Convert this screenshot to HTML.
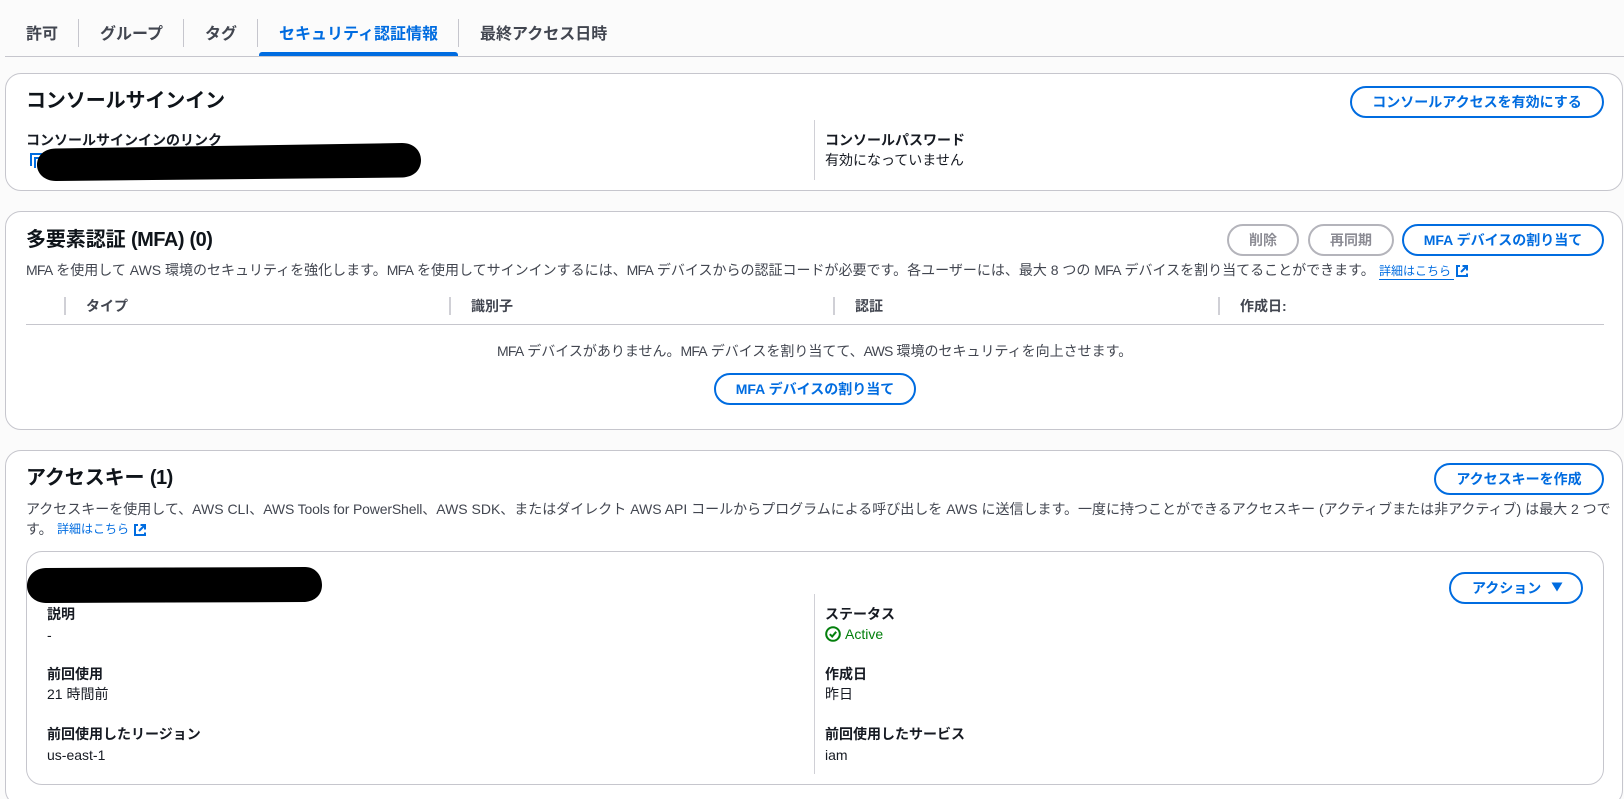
<!DOCTYPE html>
<html lang="ja">
<head>
<meta charset="utf-8">
<title>セキュリティ認証情報</title>
<style>
html,body{margin:0;padding:0;background:#fbfbfb;width:1624px;height:799px;overflow:hidden;}
body{font-family:"Liberation Sans","Noto Sans CJK JP",sans-serif;font-size:14px;color:#161a22;}
#clip{position:relative;width:1624px;height:799px;overflow:hidden;}
.t{position:absolute;white-space:nowrap;line-height:20px;}
.b{font-weight:700;}
.m{letter-spacing:-.8px;}
.n{letter-spacing:-.15px;}
.tab{position:absolute;white-space:nowrap;font-size:16px;font-weight:700;line-height:20px;color:#424650;top:25px;}
.dv{position:absolute;width:1px;background:#c6c6cd;}
.dw{position:absolute;width:2px;background:#d0d0d6;top:297px;height:18px;}
.panel{position:absolute;box-sizing:border-box;background:#fff;border:1px solid #c6c6cd;border-radius:16px;}
.h{position:absolute;white-space:nowrap;font-size:20px;font-weight:700;line-height:24px;color:#0f141a;letter-spacing:-.1px;}
.h span{letter-spacing:-.5px;}
.btn{position:absolute;box-sizing:border-box;border:2px solid #006ce0;border-radius:20px;color:#006ce0;font-weight:700;font-size:14px;text-align:center;white-space:nowrap;background:#fff;line-height:28px;}
.dis{border-color:#b4b4bb;color:#8c8c94;}
.th{position:absolute;white-space:nowrap;font-weight:700;color:#424650;line-height:20px;top:296px;}
.lnk{position:absolute;white-space:nowrap;font-size:12px;line-height:16px;color:#006ce0;}
svg{position:absolute;overflow:visible;}
</style>
</head>
<body>
<div id="clip">
<!-- tabs -->
<div class="tab" style="left:26px">許可</div>
<div class="tab" style="left:100px">グループ</div>
<div class="tab" style="left:205px">タグ</div>
<div class="tab" style="left:279px;color:#006ce0">セキュリティ認証情報</div>
<div class="tab" style="left:480px">最終アクセス日時</div>
<div class="dv" style="left:78px;top:19px;height:28px"></div>
<div class="dv" style="left:183px;top:19px;height:28px"></div>
<div class="dv" style="left:257px;top:19px;height:28px"></div>
<div class="dv" style="left:458px;top:19px;height:28px"></div>
<div style="position:absolute;left:5px;top:56px;width:1619px;height:1px;background:#c6c6cd"></div>
<div style="position:absolute;left:259px;top:52px;width:199px;height:4px;background:#006ce0;border-radius:3px 3px 0 0"></div>

<!-- panel 1 -->
<div class="panel" style="left:5px;top:73px;width:1618px;height:118px"></div>
<div class="h" style="left:26px;top:89px">コンソールサインイン</div>
<div class="t b" style="left:26px;top:130px">コンソールサインインのリンク</div>
<svg style="left:30px;top:153px" width="16" height="16" viewBox="0 0 16 16" fill="none" stroke="#006ce0" stroke-width="2"><path d="M1 13V1h11"/><path d="M5 15V5h6"/></svg>
<svg style="left:0;top:0" width="1624" height="799"><path d="M56 148.500 L402 143 C414 143 421 151 421 160 C421 170 414 177 402 177.500 L56 181 C44 181 37 173 37 165 C37 156 44 148.500 56 148.500Z" fill="#000"/></svg>
<div class="dv" style="left:814px;top:120px;height:60px;background:#d0d0d6"></div>
<div class="t b" style="left:825px;top:130px">コンソールパスワード</div>
<div class="t" style="left:825px;top:150px">有効になっていません</div>
<div class="btn" style="left:1350px;top:86px;width:254px;height:32px">コンソールアクセスを有効にする</div>

<!-- panel 2 -->
<div class="panel" style="left:5px;top:211px;width:1618px;height:219px"></div>
<div class="h" style="left:26px;top:228px">多要素認証 <span>(MFA)</span> <span>(0)</span></div>
<div class="btn dis" style="left:1227px;top:224px;width:72px;height:32px">削除</div>
<div class="btn dis" style="left:1308px;top:224px;width:86px;height:32px">再同期</div>
<div class="btn" style="left:1402px;top:224px;width:202px;height:32px">MFA デバイスの割り当て</div>
<div class="t" style="left:26px;top:260px;color:#424650"><span class="m">MFA</span> を使用して AWS 環境のセキュリティを強化します。<span class="m">MFA</span> を使用してサインインするには、<span class="m">MFA</span> デバイスからの認証コードが必要です。各ユーザーには、最大 8 つの <span class="m">MFA</span> デバイスを割り当てることができます。</div>
<div class="lnk" style="left:1379px;top:263px">詳細はこちら</div>
<div style="position:absolute;left:1379px;top:279px;width:75px;height:1px;background:#006ce0"></div>
<svg style="left:1456px;top:265px" width="12" height="12" viewBox="0 0 12 12" fill="none" stroke="#006ce0" stroke-width="2"><path d="M4 1H1V11H11V8.500"/><path d="M5 7L10.500 1.500M6.500 1H11V5.500"/></svg>
<div class="dw" style="left:64px"></div>
<div class="dw" style="left:449px"></div>
<div class="dw" style="left:833px"></div>
<div class="dw" style="left:1218px"></div>
<div class="th" style="left:86px">タイプ</div>
<div class="th" style="left:471px">識別子</div>
<div class="th" style="left:855px">認証</div>
<div class="th" style="left:1240px">作成日:</div>
<div style="position:absolute;left:26px;top:324px;width:1578px;height:1px;background:#c6c6cd"></div>
<div class="t" style="left:497px;top:341px;color:#424650"><span class="m">MFA</span> デバイスがありません。<span class="m">MFA</span> デバイスを割り当てて、<span class="m">AWS</span> 環境のセキュリティを向上させます。</div>
<div class="btn" style="left:714px;top:373px;width:202px;height:32px">MFA デバイスの割り当て</div>

<!-- panel 3 -->
<div class="panel" style="left:5px;top:450px;width:1618px;height:356px"></div>
<div class="h" style="left:26px;top:466px">アクセスキー <span>(1)</span></div>
<div class="btn" style="left:1434px;top:463px;width:170px;height:32px">アクセスキーを作成</div>
<div class="t" style="left:26px;top:499px;color:#424650">アクセスキーを使用して、AWS CLI、<span class="n">AWS Tools for PowerShell</span>、AWS SDK、またはダイレクト AWS API コールからプログラムによる呼び出しを AWS に送信します。一度に持つことができるアクセスキー (アクティブまたは非アクティブ) は最大 2 つで</div>
<div class="t" style="left:26px;top:519px;color:#424650">す。</div>
<div class="lnk" style="left:57px;top:521px">詳細はこちら</div>
<svg style="left:134px;top:524px" width="12" height="12" viewBox="0 0 12 12" fill="none" stroke="#006ce0" stroke-width="2"><path d="M4 1H1V11H11V8.500"/><path d="M5 7L10.500 1.500M6.500 1H11V5.500"/></svg>

<div class="panel" style="left:26px;top:551px;width:1578px;height:234px"></div>
<svg style="left:0;top:0" width="1624" height="799"><path d="M46 568 L305 567 C315 567 322 575 322 585 C322 595 315 601 305 602 L46 603 C36 603 27 596 27 586 C27 575 36 568 46 568Z" fill="#000"/></svg>
<div class="btn" style="left:1449px;top:572px;width:134px;height:32px;text-align:left;padding-left:21px">アクション</div>
<svg style="left:1551px;top:582px" width="12" height="10" viewBox="0 0 12 10"><path d="M0.500 0.500H11.500L6 9.500Z" fill="#006ce0"/></svg>
<div class="dv" style="left:814px;top:594px;height:180px;background:#d0d0d6"></div>

<div class="t b" style="left:47px;top:604px">説明</div>
<div class="t" style="left:47px;top:625px">-</div>
<div class="t b" style="left:47px;top:664px">前回使用</div>
<div class="t" style="left:47px;top:684px">21 時間前</div>
<div class="t b" style="left:47px;top:724px">前回使用したリージョン</div>
<div class="t" style="left:47px;top:745px">us-east-1</div>

<div class="t b" style="left:825px;top:604px">ステータス</div>
<svg style="left:825px;top:626px" width="16" height="16" viewBox="0 0 16 16" fill="none" stroke="#037f0c" stroke-width="2"><circle cx="8" cy="8" r="6.800"/><path d="M4.800 8.200L7.200 10.500L11.200 5.800"/></svg>
<div class="t" style="left:845px;top:624px;color:#037f0c">Active</div>
<div class="t b" style="left:825px;top:664px">作成日</div>
<div class="t" style="left:825px;top:684px">昨日</div>
<div class="t b" style="left:825px;top:724px">前回使用したサービス</div>
<div class="t" style="left:825px;top:745px">iam</div>
</div>
</body>
</html>
